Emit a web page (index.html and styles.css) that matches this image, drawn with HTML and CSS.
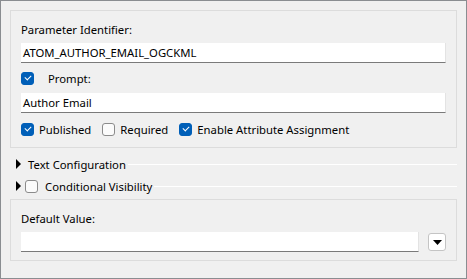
FILE: index.html
```html
<!DOCTYPE html>
<html lang="en">
<head>
    <meta charset="UTF-8">
    <title>Parameter Editor</title>
    <link rel="stylesheet" href="styles.css">
</head>
<body>
    <div class="window">
        <div class="group">
            <div class="label">Parameter Identifier:</div>
            <div class="field">ATOM_AUTHOR_EMAIL_OGCKML</div>

            <div class="row prompt-row">
                <span class="check on"></span>
                <span class="prompt-text">Prompt:</span>
            </div>
            <div class="field">Author Email</div>

            <div class="row options-row">
                <span class="check on"></span><span class="opt">Published</span>
                <span class="check"></span><span class="opt">Required</span>
                <span class="check on"></span><span class="opt">Enable Attribute Assignment</span>
            </div>
        </div>

        <div class="section first">
            <span class="arrow"></span>
            <span class="section-title">Text Configuration</span>
            <span class="rule"></span>
        </div>
        <div class="section">
            <span class="arrow"></span>
            <span class="check small"></span>
            <span class="section-title">Conditional Visibility</span>
            <span class="rule"></span>
        </div>

        <div class="group last">
            <div class="label">Default Value:</div>
            <div class="field-row">
                <div class="field grow"></div>
                <span class="drop-btn">
                    <svg width="9" height="5" viewBox="0 0 9 5"><polygon points="0,0 9,0 4.5,5" fill="#000"/></svg>
                </span>
            </div>
        </div>
    </div>
</body>
</html>
```

FILE: styles.css
```css
/* Page */
body {
    margin: 0;
    font-family: 'Noto Sans', 'Open Sans', sans-serif;
    font-size: 11.3px;
    color: #000;
}

.window {
    box-sizing: border-box;
    width: 467px;
    height: 279px;
    border: 1px solid #8a8d91;
    background: #f0f0f0;
    padding: 9px 9px 0 9px;
}

/* Group boxes */
.group {
    border: 1px solid #dcdcdc;
    padding: 10px 10px 10px 10px;
}

.group.last {
    margin-top: 3px;
    padding-bottom: 8px;
}

.label {
    height: 16px;
    line-height: 17px;
    margin-bottom: 6px;
}

.field {
    box-sizing: border-box;
    height: 20px;
    line-height: 19px;
    background: #fff;
    border-bottom: 1px solid #7a7a7a;
    border-right: 1px solid #e3e3e3;
    padding-left: 2px;
    white-space: nowrap;
}

.row {
    display: flex;
    align-items: center;
    height: 16px;
}

.prompt-row {
    margin: 7px 0;
}

.prompt-text {
    margin-left: 14px;
}

.options-row {
    margin-top: 8px;
}

.opt {
    margin-left: 5px;
    margin-right: 11px;
}

/* Checkboxes */
.check {
    box-sizing: border-box;
    width: 13px;
    height: 13px;
    border: 1px solid #8b8b8b;
    border-radius: 3px;
    background: #fbfbfb;
    flex: none;
    position: relative;
}

.check.on {
    background: #005fb8;
    border-color: #005fb8;
}

.check.on::after {
    content: "";
    position: absolute;
    left: 3px;
    top: 2px;
    width: 5px;
    height: 3px;
    border-left: 1px solid #fff;
    border-bottom: 1px solid #fff;
    transform: rotate(-45deg);
}

/* Collapsible sections */
.section {
    display: flex;
    align-items: center;
    height: 20px;
    margin-top: 2px;
}

.section.first {
    margin-top: 6px;
}

.arrow {
    width: 0;
    height: 0;
    border-top: 5px solid transparent;
    border-bottom: 5px solid transparent;
    border-left: 5px solid #000;
    margin-left: 6px;
    margin-right: 7px;
    flex: none;
}

.check.small {
    margin-left: -3px;
    margin-right: 7px;
}

.section-title {
    white-space: nowrap;
}

.rule {
    flex: 1;
    height: 1px;
    background: #fff;
    margin-left: 2px;
}

/* Default value */
.field-row {
    display: flex;
    align-items: center;
}

.grow {
    flex: 1;
}

.drop-btn {
    box-sizing: border-box;
    width: 18px;
    height: 18px;
    margin-left: 9px;
    border: 1px solid #c4c4c4;
    border-radius: 3px;
    background: #fff;
    display: flex;
    align-items: center;
    justify-content: center;
    flex: none;
}
```
